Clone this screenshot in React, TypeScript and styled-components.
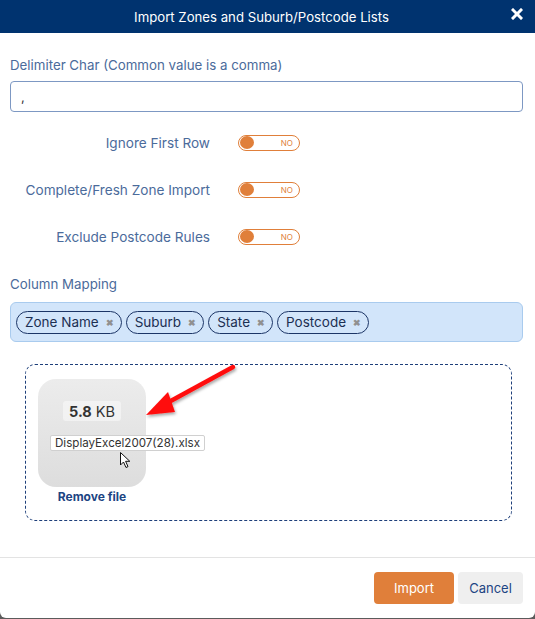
import React from "react";
import styled, { createGlobalStyle } from "styled-components";

const Global = createGlobalStyle`
  html, body { margin: 0; padding: 0; background: #5b5b5b; }
  body { font-family: Inter, "Noto Sans", Arial, sans-serif; }
  * { box-sizing: border-box; }
`;

const Modal = styled.div`
  width: 535px;
  height: 618px;
  background: #fff;
  border-radius: 0 0 6px 6px;
  display: flex;
  flex-direction: column;
  overflow: hidden;
`;

const Header = styled.div`
  height: 33px;
  background: #00336f;
  color: #fff;
  display: flex;
  align-items: center;
  justify-content: center;
  position: relative;
  font-size: 13.2px;
  padding-right: 12px;
  flex-shrink: 0;
`;

const Close = styled.span`
  position: absolute;
  right: 12px;
  top: 8px;
  display: flex;
`;

const Body = styled.div`
  flex: 1;
  padding: 24px 12px 0 10px;
  display: flex;
  flex-direction: column;
`;

const Label = styled.div<{ $mt?: number }>`
  font-size: 13.3px;
  color: #4b6b9b;
  line-height: 16px;
  margin-top: ${(p) => p.$mt ?? 0}px;
`;

const Input = styled.div`
  margin-top: 8px;
  height: 31px;
  border: 1px solid #7d98c3;
  border-radius: 4px;
  padding: 0 10px;
  display: flex;
  align-items: center;
  font-size: 13px;
  color: #333;
`;

const ToggleGrid = styled.div`
  margin-top: 7px;
  display: grid;
  grid-template-columns: 200px auto;
  grid-auto-rows: 47px;
  column-gap: 28px;
  align-items: center;
`;

const ToggleLabel = styled.div`
  text-align: right;
  font-size: 13.6px;
  color: #4b6b9b;
`;

const Toggle = styled.div`
  width: 62px;
  height: 16px;
  border: 1.5px solid #e07f3a;
  border-radius: 8px;
  display: flex;
  align-items: center;
  justify-content: space-between;
  padding: 0 6px 0 1px;
`;

const Knob = styled.span`
  width: 14px;
  height: 13px;
  border-radius: 50%;
  background: #e07f3a;
`;

const ToggleText = styled.span`
  font-size: 8px;
  color: #e07f3a;
`;

const TagBox = styled.div`
  margin-top: 10px;
  height: 40px;
  background: #d2e5fa;
  border: 1px solid #a9cbee;
  border-radius: 6px;
  display: flex;
  align-items: center;
  gap: 4px;
  padding: 0 5px;
`;

const Tag = styled.div`
  height: 23px;
  border: 1.3px solid #1c3566;
  border-radius: 12px;
  display: flex;
  align-items: center;
  gap: 7px;
  padding: 0 7px 0 8px;
  font-size: 13.5px;
  color: #1c2f52;
  background: #d2e5fa;
`;

const TagX = styled.span`
  font-size: 9px;
  color: #909090;
  font-weight: 700;
`;

const Drop = styled.div`
  margin: 22px 0 0 15px;
  width: 487px;
  height: 157px;
  border: 1px dashed #1e3f7a;
  border-radius: 10px;
  position: relative;
  padding: 14px 0 0 12px;
`;

const Preview = styled.div`
  width: 108px;
  display: flex;
  flex-direction: column;
  align-items: center;
`;

const Thumb = styled.div`
  width: 108px;
  height: 108px;
  border-radius: 18px;
  background: linear-gradient(#ececec, #dddddd);
  display: flex;
  flex-direction: column;
  align-items: center;
  position: relative;
`;

const Size = styled.div`
  margin-top: 22px;
  background: rgba(255, 255, 255, 0.45);
  border-radius: 3px;
  padding: 0 6px;
  height: 20px;
  display: flex;
  align-items: center;
  gap: 4px;
  font-size: 14.5px;
  color: #333;
`;

const FileName = styled.div`
  position: absolute;
  left: 12px;
  top: 56px;
  height: 16px;
  padding: 0 4px;
  background: #fff;
  border: 1px solid #d0d0d0;
  border-radius: 2px;
  font-size: 11.6px;
  color: #333;
  white-space: nowrap;
  display: flex;
  align-items: center;
`;

const Remove = styled.div`
  margin-top: 2px;
  font-size: 12px;
  font-weight: 700;
  color: #1d4583;
`;

const Overlay = styled.svg`
  position: absolute;
  left: 0;
  top: 0;
  overflow: visible;
  pointer-events: none;
`;

const Footer = styled.div`
  border-top: 1px solid #e3e3e3;
  height: 61px;
  display: flex;
  align-items: flex-start;
  justify-content: flex-end;
  gap: 4px;
  padding: 14px 12px 0 0;
  flex-shrink: 0;
`;

const Button = styled.div<{ $primary?: boolean }>`
  height: 32px;
  border-radius: 4px;
  display: flex;
  align-items: center;
  justify-content: center;
  font-size: 13px;
  width: ${(p) => (p.$primary ? 80 : 65)}px;
  background: ${(p) => (p.$primary ? "#e07f3a" : "#efefef")};
  color: ${(p) => (p.$primary ? "#fff" : "#1d4583")};
`;

const toggles = ["Ignore First Row", "Complete/Fresh Zone Import", "Exclude Postcode Rules"];
const tags = ["Zone Name", "Suburb", "State", "Postcode"];

export default function App() {
  return (
    <>
      <Global />
      <Modal>
        <Header>
          Import Zones and Suburb/Postcode Lists
          <Close>
            <svg width="12" height="12" viewBox="0 0 12 12">
              <path d="M2 2 L10 10 M10 2 L2 10" stroke="#fff" strokeWidth="3" strokeLinecap="square" />
            </svg>
          </Close>
        </Header>
        <Body>
          <Label>Delimiter Char (Common value is a comma)</Label>
          <Input>,</Input>
          <ToggleGrid>
            {toggles.map((t) => (
              <React.Fragment key={t}>
                <ToggleLabel>{t}</ToggleLabel>
                <Toggle>
                  <Knob />
                  <ToggleText>NO</ToggleText>
                </Toggle>
              </React.Fragment>
            ))}
          </ToggleGrid>
          <Label $mt={16}>Column Mapping</Label>
          <TagBox>
            {tags.map((t) => (
              <Tag key={t}>
                {t}
                <TagX>✖</TagX>
              </Tag>
            ))}
          </TagBox>
          <Drop>
            <Preview>
              <Thumb>
                <Size>
                  <b>5.8</b> KB
                </Size>
                <FileName>DisplayExcel2007(28).xlsx</FileName>
              </Thumb>
              <Remove>Remove file</Remove>
            </Preview>
            <Overlay width="487" height="157">
              <defs>
                <filter id="sh" x="-20%" y="-20%" width="140%" height="140%">
                  <feDropShadow dx="1" dy="2" stdDeviation="1.5" floodColor="#000" floodOpacity="0.35" />
                </filter>
              </defs>
              <g filter="url(#sh)" transform="translate(-25,-365)">
                <path d="M232 367 L166 403" stroke="#ff0f0f" strokeWidth="4.5" strokeLinecap="round" />
                <path d="M145 415 L167 392 L174 412 Z" fill="#ff0f0f" />
              </g>
              <g transform="translate(94,87)">
                <path
                  d="M0.5 0.5 L0.5 13 L3.5 10 L6 15.5 L8 14.6 L5.6 9.3 L9.8 9.3 Z"
                  fill="#fff"
                  stroke="#111"
                  strokeWidth="1"
                  strokeLinejoin="round"
                />
              </g>
            </Overlay>
          </Drop>
        </Body>
        <Footer>
          <Button $primary>Import</Button>
          <Button>Cancel</Button>
        </Footer>
      </Modal>
    </>
  );
}
